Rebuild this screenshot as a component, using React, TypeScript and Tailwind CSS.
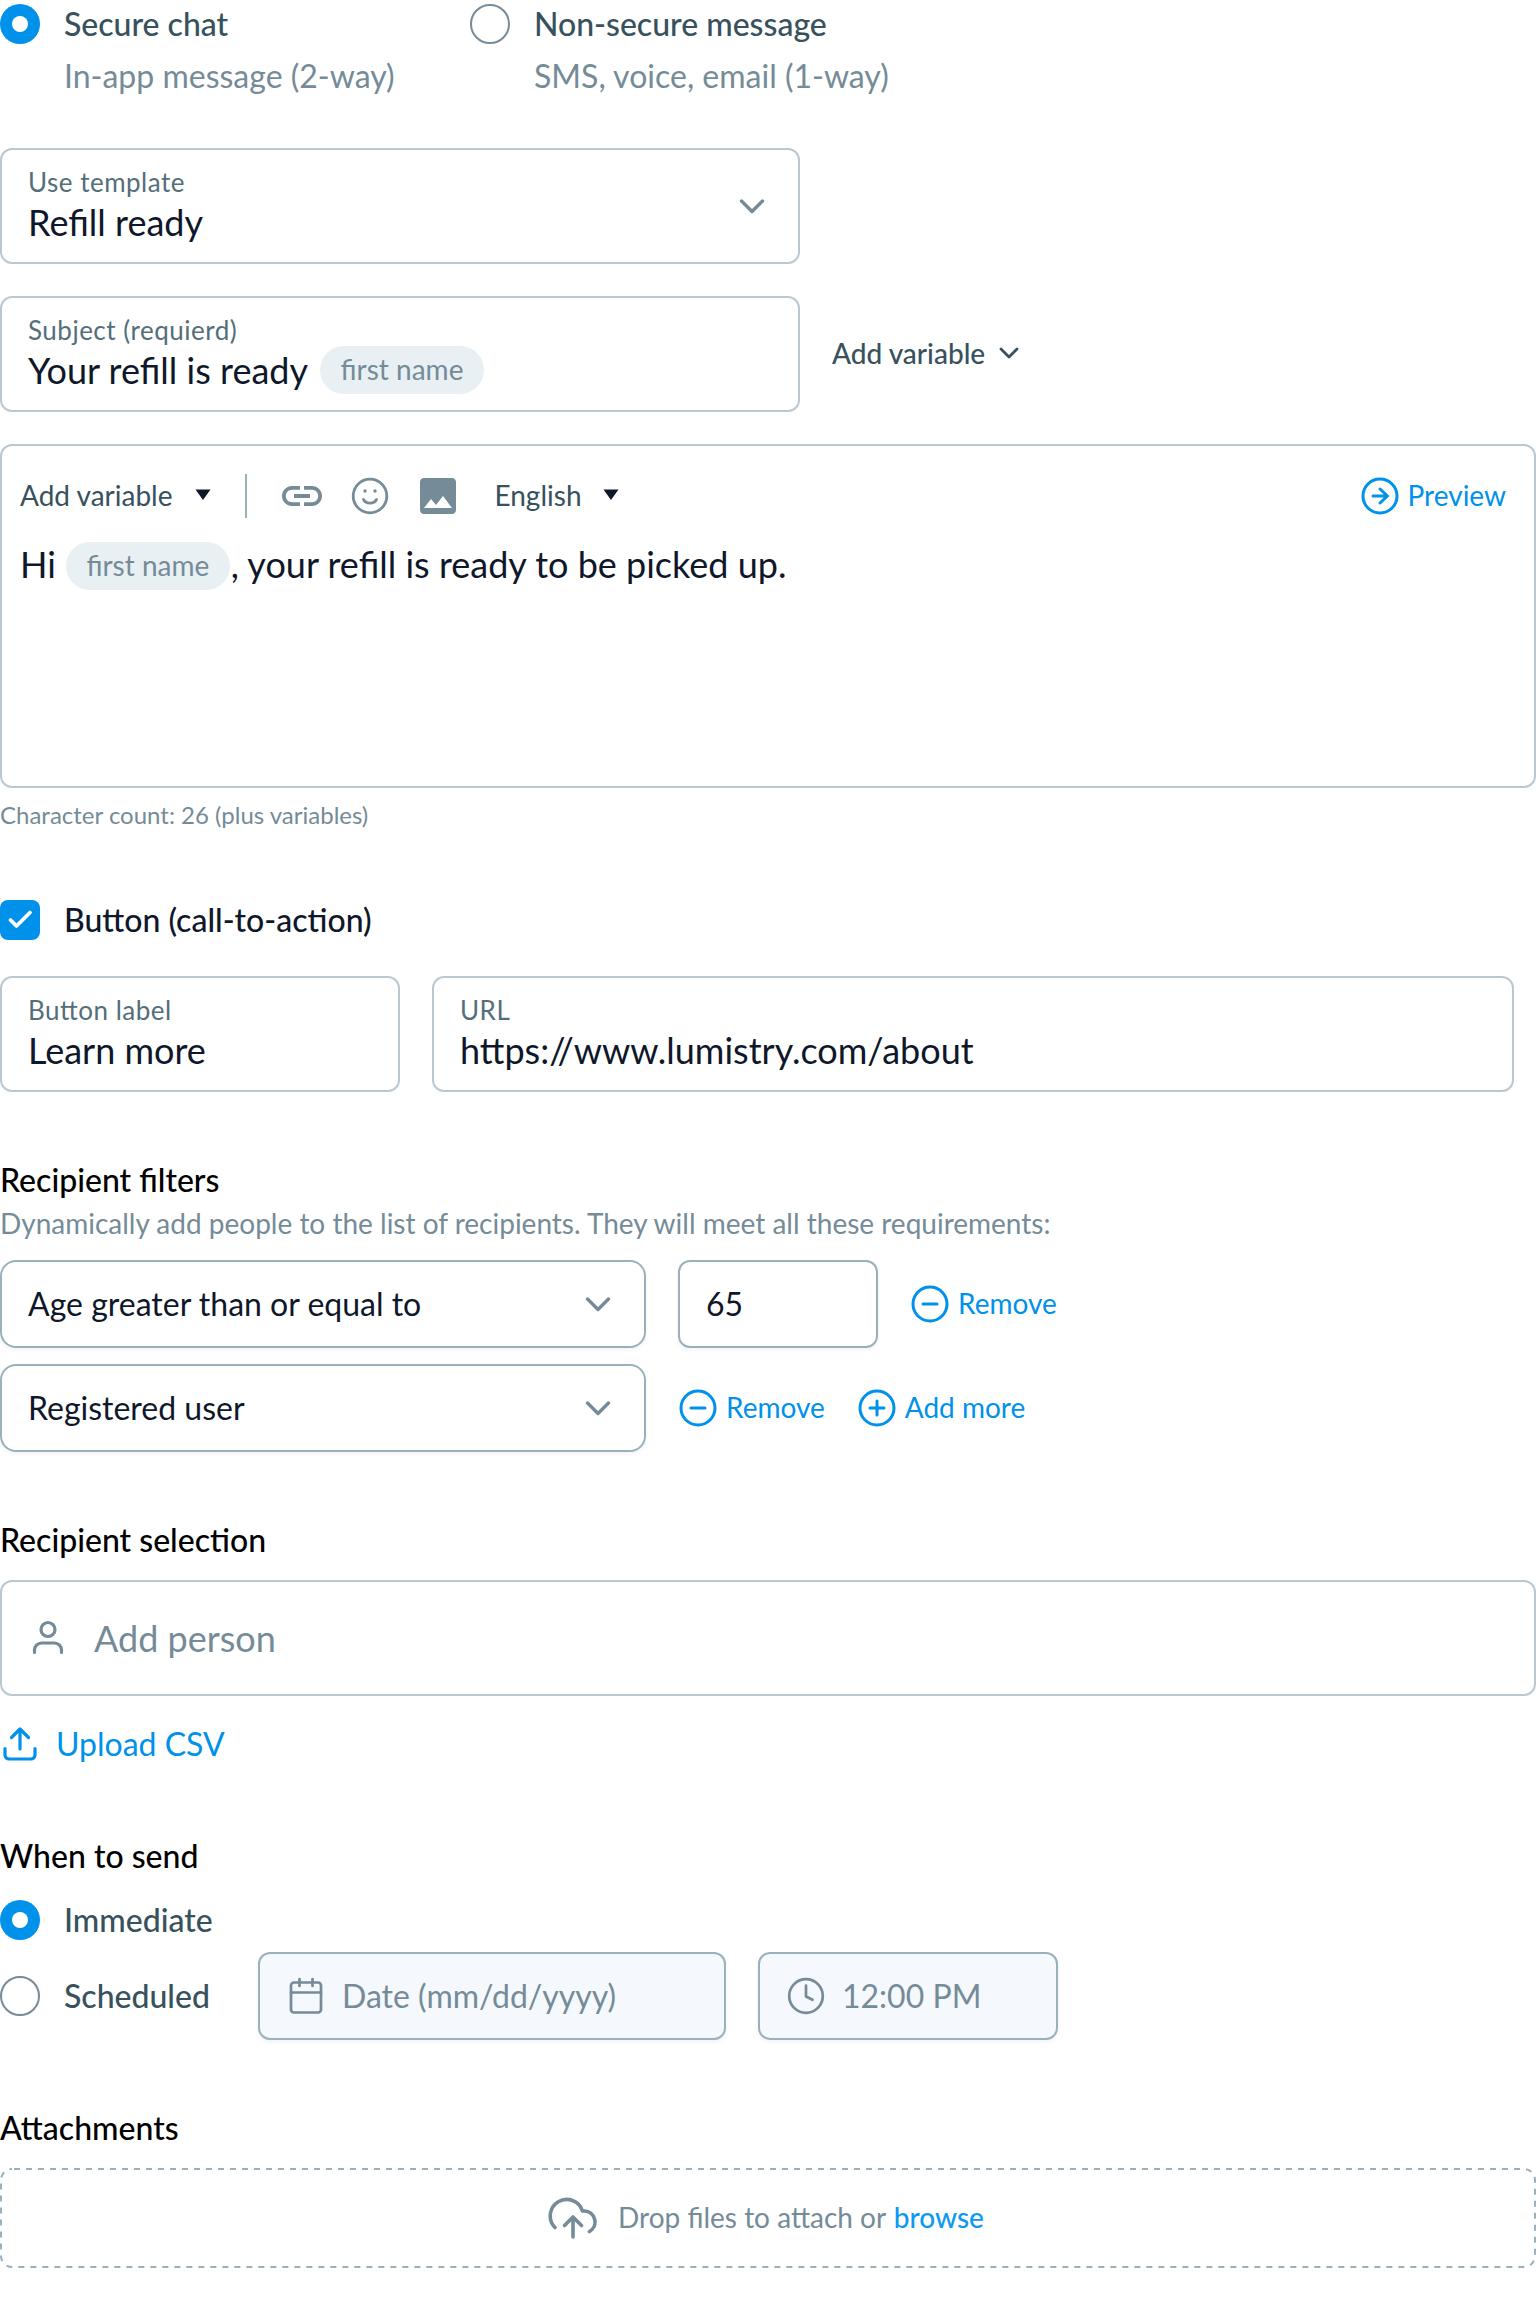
import type { ReactNode } from "react";

function Radio({ checked }: { checked?: boolean }) {
  return checked ? (
    <span className="flex size-10 shrink-0 items-center justify-center rounded-full bg-[#0091ea]">
      <span className="size-4 rounded-full bg-white" />
    </span>
  ) : (
    <span className="size-10 shrink-0 rounded-full border-2 border-[#758b98]" />
  );
}

function Chevron({ small }: { small?: boolean }) {
  return small ? (
    <svg width="24" height="16" viewBox="0 0 24 16" fill="none" stroke="#37515d" strokeWidth="2.8" strokeLinecap="round" strokeLinejoin="round">
      <path d="M4 4l8 8 8-8" />
    </svg>
  ) : (
    <svg width="28" height="18" viewBox="0 0 28 18" fill="none" stroke="#758b98" strokeWidth="3.4" strokeLinecap="round" strokeLinejoin="round">
      <path d="M3.5 4l10.5 10.5L24.5 4" />
    </svg>
  );
}

function Caret() {
  return (
    <svg width="16" height="12" viewBox="0 0 16 12" fill="#0f172a">
      <path d="M0.5 0.5h15L8 11z" />
    </svg>
  );
}

function Chip({ className = "" }: { className?: string }) {
  return (
    <span className={`flex h-12 w-[164px] shrink-0 items-center justify-center rounded-full bg-[#e8f0f4] pb-0.5 text-[28px] leading-10 text-[#758b98] ${className}`}>
      first name
    </span>
  );
}

function Field({ label, className, children, trailing }: { label: string; className: string; children: ReactNode; trailing?: ReactNode }) {
  return (
    <div className={`flex h-[116px] items-center justify-between rounded-xl border-2 border-[#bbc8d0] pl-[26px] pr-8 ${className}`}>
      <div className="flex h-full flex-col pt-4">
        <span className="text-[26px] leading-8 tracking-[0.5px] text-[#546e7a] [font-feature-settings:'liga'_1]">{label}</span>
        <span className="mt-1 flex h-10 items-center whitespace-pre text-[36px] leading-10 text-[#0f172a]">{children}</span>
      </div>
      {trailing}
    </div>
  );
}

function CircleLink({ kind, children, className = "" }: { kind: "minus" | "plus" | "arrow"; children: ReactNode; className?: string }) {
  return (
    <div className={`flex items-center text-[28px] leading-10 text-[#0091ea] ${className}`}>
      <svg width="40" height="40" viewBox="0 0 40 40" fill="none" stroke="currentColor" strokeWidth="3" strokeLinecap="round" strokeLinejoin="round">
        <circle cx="20" cy="20" r="17" />
        {kind === "arrow" ? <path d="M13 20h14M20 13l7.500 7-7.500 7" /> : <path d="M13 20h14" />}
        {kind === "plus" && <path d="M20 13v14" />}
      </svg>
      <span className="ml-2 pb-0.5">{children}</span>
    </div>
  );
}

function Select({ children }: { children: ReactNode }) {
  return (
    <div className="flex h-[88px] w-[646px] items-center justify-between rounded-2xl border-2 border-[#9ab0bb] pl-[26px] pr-8 text-[32px] leading-10 text-[#0f172a] shadow-[0_2px_4px_rgba(15,23,42,0.05)]">
      {children}
      <Chevron />
    </div>
  );
}

function Heading({ children, className }: { children: ReactNode; className: string }) {
  return <h2 className={`text-[32px] font-medium leading-10 text-black ${className}`}>{children}</h2>;
}

export default function App() {
  return (
    <div className="flex h-[2300px] w-[1536px] flex-col overflow-hidden bg-white font-['Lato',sans-serif]">
      <div className="flex pt-1 text-[32px] leading-10">
        <div className="flex w-[470px]">
          <Radio checked />
          <div className="ml-6">
            <div className="font-medium text-[#37515d]">Secure chat</div>
            <div className="mt-3 text-[#758b98]">In-app message (2-way)</div>
          </div>
        </div>
        <div className="flex">
          <Radio />
          <div className="ml-6">
            <div className="font-medium text-[#37515d]">Non-secure message</div>
            <div className="mt-3 text-[#758b98]">SMS, voice, email (1-way)</div>
          </div>
        </div>
      </div>

      <Field label="Use template" className="mt-[52px] w-[800px]" trailing={<Chevron />}>
        Refill ready
      </Field>

      <div className="mt-8 flex items-center">
        <Field label="Subject (requierd)" className="w-[800px]">
          Your refill is ready
          <Chip className="ml-3" />
        </Field>
        <div className="ml-8 flex items-center pb-0.5 text-[28px] font-medium leading-10 text-[#37515d]">
          Add variable
          <span className="ml-3">
            <Chevron small />
          </span>
        </div>
      </div>

      <div className="mt-8 h-[344px] rounded-xl border-2 border-[#bbc8d0] px-[18px] pt-[26px]">
        <div className="flex h-12 items-center text-[28px] leading-10 text-[#37515d]">
          <span className="pb-0.5">Add variable</span>
          <span className="ml-[23px] pb-0.5"><Caret /></span>
          <span className="ml-[34px] h-11 w-0.5 bg-[#9ab0bb]" />
          <svg className="ml-[31px]" width="48" height="48" viewBox="0 0 24 24" fill="#758b98">
            <path d="M3.9 12c0-1.71 1.39-3.1 3.1-3.1h4V7H7c-2.76 0-5 2.24-5 5s2.24 5 5 5h4v-1.9H7c-1.71 0-3.1-1.39-3.1-3.1zM8 13h8v-2H8v2zm9-6h-4v1.9h4c1.71 0 3.1 1.39 3.1 3.1s-1.39 3.1-3.1 3.1h-4V17h4c2.76 0 5-2.24 5-5s-2.24-5-5-5z" />
          </svg>
          <svg className="ml-6" width="40" height="40" viewBox="0 0 40 40" fill="none" stroke="#758b98" strokeWidth="2.8" strokeLinecap="round">
            <circle cx="20" cy="20" r="16.8" />
            <path d="M13.5 23.5c2.6 4.8 10.4 4.8 13 0" />
            <circle cx="15" cy="15" r="1.7" fill="#758b98" stroke="none" />
            <circle cx="25" cy="15" r="1.7" fill="#758b98" stroke="none" />
          </svg>
          <svg className="ml-6" width="48" height="48" viewBox="0 0 24 24" fill="#758b98">
            <path d="M21 19V5c0-1.1-.9-2-2-2H5c-1.1 0-2 .9-2 2v14c0 1.1.9 2 2 2h14c1.1 0 2-.9 2-2zM8.5 13.5l2.5 3.01L14.5 12l4.5 6H5l3.5-4.5z" />
          </svg>
          <span className="ml-8 pb-0.5">English</span>
          <span className="ml-[21px] pb-0.5"><Caret /></span>
          <CircleLink kind="arrow" className="ml-auto mr-2.5">Preview</CircleLink>
        </div>
        <div className="mt-[22px] flex h-12 items-center whitespace-pre text-[36px] leading-10 text-[#0f172a]">
          <span className="pb-1">Hi</span>
          <Chip className="ml-2.5" />
          <span className="ml-px pb-1">, your refill is ready to be picked up.</span>
        </div>
      </div>

      <div className="mt-[11px] text-[24px] leading-8 text-[#758b98]">Character count: 26 (plus variables)</div>

      <div className="mt-[69px] flex h-10 items-center text-[32px] font-medium leading-10 text-[#0f172a]">
        <span className="flex size-10 items-center justify-center rounded-lg bg-[#0091ea]">
          <svg width="40" height="40" viewBox="0 0 40 40" fill="none" stroke="white" strokeWidth="3.8" strokeLinecap="round" strokeLinejoin="round">
            <path d="M10.5 20l6 6L30 12.5" />
          </svg>
        </span>
        <span className="ml-6">Button (call-to-action)</span>
      </div>

      <div className="mt-9 flex gap-8">
        <Field label="Button label" className="w-[400px]">Learn more</Field>
        <Field label="URL" className="w-[1082px]">https://www.lumistry.com/about</Field>
      </div>

      <Heading className="mt-[68px]">Recipient filters</Heading>
      <div className="mt-[3px] text-[28px] leading-10 text-[#758b98]">
        Dynamically add people to the list of recipients. They will meet all these requirements:
      </div>
      <div className="mt-[17px] flex items-center">
        <Select>Age greater than or equal to</Select>
        <div className="ml-8 flex h-[88px] w-[200px] items-center rounded-xl border-2 border-[#9ab0bb] pl-[26px] text-[32px] leading-10 text-[#0f172a] shadow-[0_2px_4px_rgba(15,23,42,0.05)]">65</div>
        <CircleLink kind="minus" className="ml-8">Remove</CircleLink>
      </div>
      <div className="mt-4 flex items-center">
        <Select>Registered user</Select>
        <CircleLink kind="minus" className="ml-8">Remove</CircleLink>
        <CircleLink kind="plus" className="ml-8">Add more</CircleLink>
      </div>

      <Heading className="mt-[68px]">Recipient selection</Heading>
      <div className="mt-5 flex h-[116px] items-center rounded-xl border-2 border-[#bbc8d0] pl-[26px] text-[36px] leading-10 text-[#758b98]">
        <svg width="40" height="40" viewBox="0 0 40 40" fill="none" stroke="#758b98" strokeWidth="3.2" strokeLinecap="round">
          <circle cx="20" cy="11.5" r="7" />
          <path d="M6.5 34.5V32a7 7 0 0 1 7-7h13a7 7 0 0 1 7 7v2.5" />
        </svg>
        <span className="ml-[26px]">Add person</span>
      </div>
      <div className="mt-7 flex h-10 items-center text-[32px] leading-10 text-[#0091ea]">
        <svg width="40" height="40" viewBox="0 0 40 40" fill="none" stroke="currentColor" strokeWidth="3.2" strokeLinecap="round" strokeLinejoin="round">
          <path d="M20 25V5M11.5 13.5L20 5l8.5 8.5M5 24.5V31a4 4 0 0 0 4 4h22a4 4 0 0 0 4-4v-6.5" />
        </svg>
        <span className="ml-4">Upload CSV</span>
      </div>

      <Heading className="mt-[72px]">When to send</Heading>
      <div className="mt-6 flex items-center text-[32px] font-medium leading-10 text-[#37515d]">
        <Radio checked />
        <span className="ml-6">Immediate</span>
      </div>
      <div className="mt-3 flex items-center text-[32px] leading-10 text-[#37515d]">
        <Radio />
        <span className="ml-6 w-[194px] font-medium">Scheduled</span>
        <div className="flex h-[88px] w-[468px] items-center rounded-xl border-2 border-[#9ab0bb] bg-[#f5f8fd] pl-[26px] text-[#758b98] shadow-[0_2px_4px_rgba(15,23,42,0.05)]">
          <svg width="40" height="40" viewBox="0 0 40 40" fill="none" stroke="currentColor" strokeWidth="2.7" strokeLinecap="round" strokeLinejoin="round">
            <rect x="5" y="6.5" width="30" height="30" rx="3" />
            <path d="M5 16.5h30M13.5 3v7M26.5 3v7" />
          </svg>
          <span className="ml-4">Date (mm/dd/yyyy)</span>
        </div>
        <div className="ml-8 flex h-[88px] w-[300px] items-center rounded-xl border-2 border-[#9ab0bb] bg-[#f5f8fd] pl-[26px] text-[#758b98] shadow-[0_2px_4px_rgba(15,23,42,0.05)]">
          <svg width="40" height="40" viewBox="0 0 40 40" fill="none" stroke="currentColor" strokeWidth="2.7" strokeLinecap="round" strokeLinejoin="round">
            <circle cx="20" cy="20" r="16.8" />
            <path d="M20 9.5V20.5l6.5 3.3" />
          </svg>
          <span className="ml-4">12:00 PM</span>
        </div>
      </div>

      <Heading className="mt-[68px]">Attachments</Heading>
      <div className="relative mt-5 flex h-[100px] items-center justify-center pr-1 text-[28px] leading-10 text-[#758b98]">
        <svg className="absolute inset-0" width="1536" height="100" fill="none" stroke="#9ab0bb" strokeWidth="2">
          <rect x="1" y="1" width="1534" height="98" rx="11" strokeDasharray="6 6" strokeDashoffset="-2" />
        </svg>
        <svg width="50" height="42" viewBox="0 0 50 42" fill="none" stroke="currentColor" strokeWidth="3.6" strokeLinecap="round" strokeLinejoin="round">
          <path d="M7 30.5A16.5 16.5 0 1 1 34.5 14h2a11 11 0 0 1 5 20.500M25 40V20M16.5 28.5L25 20l8.5 8.5" />
        </svg>
        <span className="ml-5 whitespace-pre pb-0.5">Drop files to attach or <span className="ml-px font-medium text-[#0d99f2]">browse</span></span>
      </div>
    </div>
  );
}
